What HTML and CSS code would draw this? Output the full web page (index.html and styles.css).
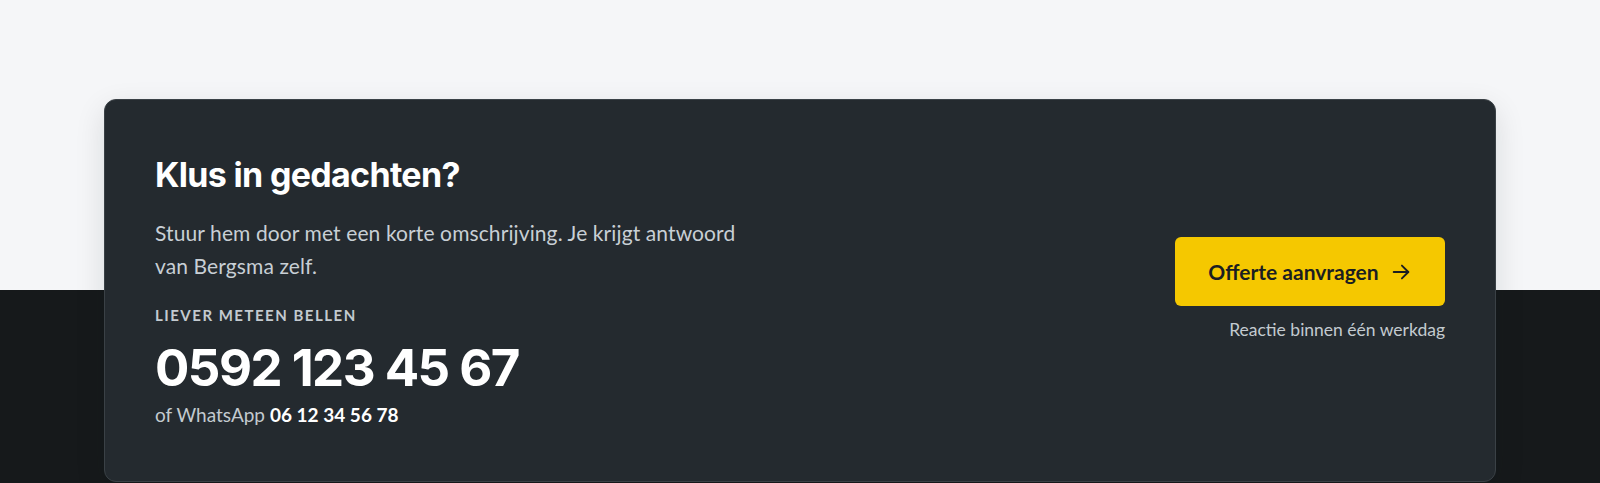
FILE: index.html
```html
<!DOCTYPE html>
<html lang="nl">
<head>
<meta charset="utf-8">
<title>Klus in gedachten?</title>
<link rel="stylesheet" href="styles.css">
</head>
<body>
<section class="cta-section">
  <div class="cta-card">
    <div class="cta-left">
      <h2 class="cta-title">Klus in gedachten?</h2>
      <p class="cta-text">Stuur hem door met een korte omschrijving. Je krijgt antwoord van Bergsma zelf.</p>
      <div class="cta-label">LIEVER METEEN BELLEN</div>
      <div class="cta-phone">0592 123 45 67</div>
      <div class="cta-whatsapp">of WhatsApp <strong>06 12 34 56 78</strong></div>
    </div>
    <div class="cta-right">
      <a class="cta-button" href="#">Offerte aanvragen
        <svg class="cta-arrow" width="22" height="22" viewBox="0 0 24 24" fill="none" stroke="currentColor" stroke-width="2" stroke-linecap="round" stroke-linejoin="round"><path d="M4 12h16"/><path d="M13 5l7 7-7 7"/></svg>
      </a>
      <div class="cta-note">Reactie binnen één werkdag</div>
    </div>
  </div>
</section>
</body>
</html>
```
FILE: styles.css
```css
* { box-sizing: border-box; }
html, body { margin: 0; padding: 0; }
body {
  font-family: "Lato", "Noto Sans", sans-serif;
  background: #16191b;
}
.cta-section {
  background: linear-gradient(to bottom, #f5f6f8 0, #f5f6f8 290px, #16191b 290px, #16191b 100%);
  padding: 99px 104px 0;
  height: 483px;
}
.cta-card {
  background: #242a2f;
  border: 1px solid #3a4146;
  border-radius: 12px;
  height: 383px;
  padding: 0 50px 0 50px;
  display: flex;
  align-items: center;
  justify-content: space-between;
  box-shadow: 0 10px 30px rgba(20, 24, 28, 0.12);
}
.cta-left {
  display: flex;
  flex-direction: column;
}
.cta-title {
  margin: 0 0 21px;
  font-family: "Inter", sans-serif;
  font-weight: 700;
  font-size: 34px;
  letter-spacing: -0.02em;
  line-height: 40px;
  color: #ffffff;
}
.cta-text {
  margin: 0;
  width: 600px;
  font-size: 21px;
  letter-spacing: 0.005em;
  line-height: 33px;
  color: #c8cfd5;
}
.cta-label {
  margin-top: 24px;
  font-size: 15px;
  font-weight: 700;
  letter-spacing: 0.1em;
  color: #c3cad0;
  line-height: 18px;
}
.cta-phone {
  margin-top: 16px;
  font-family: "Inter", sans-serif;
  font-weight: 700;
  font-size: 51px;
  letter-spacing: -0.03em;
  line-height: 56px;
  color: #ffffff;
}
.cta-whatsapp {
  margin-top: 7px;
  font-size: 19px;
  line-height: 24px;
  color: #c3cad0;
}
.cta-whatsapp strong {
  color: #ffffff;
  font-weight: 700;
}
.cta-right {
  display: flex;
  flex-direction: column;
  align-items: flex-end;
  gap: 14px;
  padding-bottom: 4px;
}
.cta-button {
  display: flex;
  align-items: center;
  justify-content: center;
  gap: 11px;
  width: 270px;
  height: 69px;
  background: #f5c800;
  border-radius: 6px;
  color: #1b1e21;
  font-weight: 700;
  font-size: 21px;
  text-decoration: none;
}
.cta-arrow { display: block; }
.cta-note {
  font-size: 17.5px;
  color: #c3cad0;
  line-height: 20px;
}
```
